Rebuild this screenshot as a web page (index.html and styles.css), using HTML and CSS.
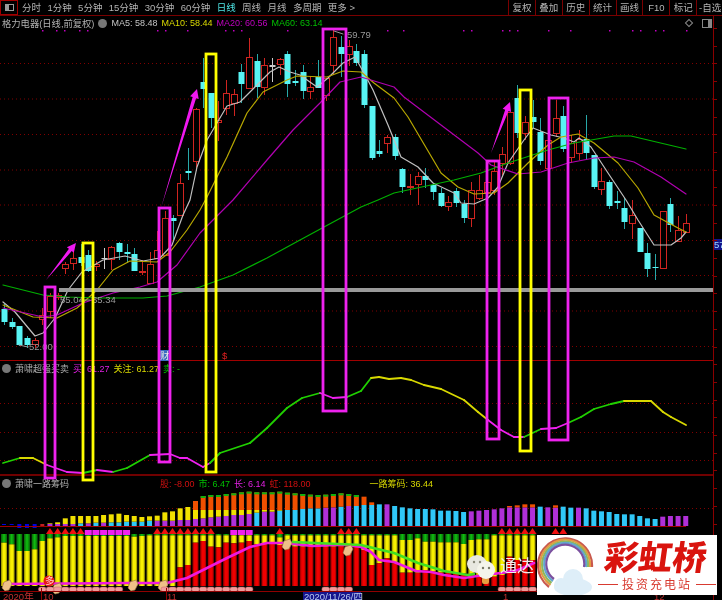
FILE: index.html
```html
<!DOCTYPE html>
<html lang="zh-CN">
<head>
    <meta charset="UTF-8">
    <title>格力电器 日线</title>
    <link rel="stylesheet" href="styles.css">
</head>
<body>
<div class="screen">

    <!-- 顶部工具栏 -->
    <div class="toolbar">
        <div class="tool-icon"><span></span></div>
        <div class="periods">
            <span>分时</span><span>1分钟</span><span>5分钟</span><span>15分钟</span><span>30分钟</span><span>60分钟</span>
            <span class="active">日线</span><span>周线</span><span>月线</span><span>多周期</span><span>更多 &gt;</span>
        </div>
        <div class="tools">
            <span>复权</span><span>叠加</span><span>历史</span><span>统计</span><span>画线</span><span>F10</span><span>标记</span><span>-自选</span>
        </div>
    </div>

    <div class="chart">
        <!-- 主图 -->
        <div class="panel panel-price">
            <div class="head">
                <span class="title">格力电器(日线,前复权)</span>
                <i class="dot"></i>
                <span class="c-gray">MA5: 58.48</span>
                <span class="c-yellow">MA10: 58.44</span>
                <span class="c-purple">MA20: 60.56</span>
                <span class="c-green">MA60: 63.14</span>
                <i class="diamond"></i>
                <i class="win"></i>
            </div>
        </div>
        <!-- 副图一 -->
        <div class="panel panel-ind">
            <div class="head">
                <i class="dot"></i>
                <span class="title">萧啸超强买卖</span>
                <span class="c-magenta">买: 61.27</span>
                <span class="c-yellow">关注: 61.27</span>
                <span class="c-green">卖: -</span>
            </div>
        </div>
        <!-- 副图二 -->
        <div class="panel panel-chip">
            <div class="head">
                <i class="dot"></i>
                <span class="title">萧啸一路筹码</span>
                <span class="c-red first">股: -8.00</span>
                <span class="c-green">市: 6.47</span>
                <span class="c-magenta">长: 6.14</span>
                <span class="c-red">虹: 118.00</span>
                <span class="c-yellow last">一路筹码: 36.44</span>
            </div>
        </div>
    </div>

    <div class="price-tag">57</div>

    <svg id="plot" class="plot" width="722" height="600" viewBox="0 0 722 600"></svg>

    <!-- 水印 -->
    <div class="wechat">
        <svg width="30" height="34" viewBox="0 0 30 34">
            <ellipse cx="10" cy="11" rx="10" ry="9" fill="#e8e8e0"/>
            <rect x="15" y="24" width="7" height="7" rx="2" fill="#e8a040"/>
            <circle cx="19" cy="17" r="9" fill="#f4f4ea"/>
            <circle cx="7" cy="9" r="1.2" fill="#887"/>
            <circle cx="13" cy="9" r="1.2" fill="#887"/>
            <circle cx="16" cy="15" r="1.2" fill="#776"/>
            <circle cx="22" cy="15" r="1.2" fill="#776"/>
        </svg>
        <span>通达</span>
    </div>

    <div class="logo">
        <svg class="rainbow" width="60" height="60" viewBox="0 0 60 60">
            <path d="M12 52A27 27 0 1 1 55 32" stroke="#c9584e"/>
            <path d="M13.5 50A25 25 0 1 1 53 32" stroke="#e39a43"/>
            <path d="M14.5 48A23 23 0 1 1 51 32" stroke="#8db85c"/>
            <path d="M16 46A21 21 0 1 1 49 32" stroke="#62a5cf"/>
            <path d="M17 44A19 19 0 1 1 47 32" stroke="#7b509f"/>
            <g class="cloud">
                <ellipse cx="36" cy="52" rx="19" ry="9"/>
                <circle cx="36" cy="44" r="10"/>
                <circle cx="24" cy="50" r="7"/>
            </g>
        </svg>
        <div class="logo-text">
            <div class="logo-name">彩虹桥</div>
            <div class="logo-sub"><i></i><span>投资充电站</span><i></i></div>
        </div>
    </div>
</div>
<script src="script.js"></script>
</body>
</html>
```

FILE: styles.css
```css
* {
    margin: 0;
    padding: 0;
    box-sizing: border-box;
}

body {
    background: #000;
}

.screen {
    position: relative;
    width: 722px;
    height: 600px;
    overflow: hidden;
    background: #000;
    color: #b4b4b4;
    font-family: "Liberation Sans", "Noto Sans CJK SC", sans-serif;
    font-size: 9.5px;
    filter: blur(0.35px); /* 原图有点糊 */
}

/* 工具栏 */
.toolbar {
    display: flex;
    align-items: stretch;
    height: 16px;
    border-bottom: 1px solid #7a0000;
    line-height: 15px;
}

.tool-icon {
    display: flex;
    align-items: center;
    justify-content: center;
    width: 18px;
    border: 1px solid #a00000;
}

.tool-icon span {
    width: 9px;
    height: 7px;
    border: 1px solid #999;
    border-left-width: 4px;
}

.periods {
    display: flex;
    gap: 6.4px;
    padding-left: 4px;
}

.periods .active {
    color: #4fe8e8;
}

.tools {
    display: flex;
    margin-left: auto;
    width: 214px;
}

.tools span {
    flex: 0 0 26.9px;
    border-left: 1px solid #7a0000;
    text-align: center;
    white-space: nowrap;
}

/* 图表区 */
.chart {
    display: flex;
    flex-direction: column;
    width: 714px;
    height: 584px;
    border-right: 1px solid #8a0000;
}

.panel {
    border-bottom: 1px solid #a00000;
}

.panel-price {
    height: 345px;
}

.panel-ind {
    height: 115px;
    border-bottom-width: 2px;
    border-bottom-color: #700000;
}

.panel-chip {
    flex: 1;
    border-bottom: none;
}

.head {
    display: flex;
    align-items: center;
    height: 14px;
    padding-left: 2px;
    gap: 4px;
    font-size: 9px;
    white-space: nowrap;
}

.panel-ind .head {
    padding-top: 1px;
}

.title {
    color: #b0b0b0;
    font-size: 9px;
}

.panel-price .title {
    font-size: 9.3px;
}

.dot {
    flex: none;
    width: 9px;
    height: 9px;
    border-radius: 50%;
    background: #777;
}

.first {
    margin-left: 87px;
}

.last {
    margin-left: 55px;
}

.c-gray { color: #c4c4c4; }
.c-yellow { color: #d8d800; }
.c-purple { color: #c000c0; }
.c-magenta { color: #e020e0; }
.c-green { color: #00c000; }
.c-red { color: #d01010; }

.diamond {
    width: 6px;
    height: 6px;
    margin-left: auto;
    margin-right: 6px;
    border: 1px solid #888;
    transform: rotate(45deg);
}

.win {
    width: 10px;
    height: 9px;
    margin-right: 1px;
    border: 1px solid #888;
    border-right-width: 4px;
}

.price-tag {
    position: absolute;
    left: 714px;
    top: 239px;
    width: 8px;
    height: 11px;
    overflow: hidden;
    background: #14148c;
    color: #9fd8ff;
    font-size: 9.5px;
    line-height: 11px;
}

.plot {
    position: absolute;
    left: 0;
    top: 0;
}

.plot text {
    font-family: "Liberation Sans", "Noto Sans CJK SC", sans-serif;
    font-size: 9.5px;
}

/* 水印 */
.wechat {
    position: absolute;
    left: 467px;
    top: 553px;
    display: flex;
    align-items: center;
    gap: 3px;
    color: #eee;
    font-size: 17px;
    line-height: 22px;
}

.wechat span {
    margin-bottom: 7px;
}

.logo {
    position: absolute;
    left: 537px;
    top: 535px;
    display: flex;
    width: 180px;
    height: 60px;
    background: #fff;
    overflow: hidden;
}

.rainbow {
    flex: none;
    fill: none;
    stroke-width: 2.2;
}

.cloud {
    fill: #deeef8;
    stroke: none;
}

.logo-text {
    display: flex;
    flex-direction: column;
    align-items: center;
    width: 120px;
}

.logo-name {
    padding-right: 2px;
    color: #d9140e;
    font-family: "Noto Sans CJK SC", sans-serif;
    font-size: 34px;
    font-weight: 900;
    line-height: 41px;
    transform: skewX(-8deg);
}

.logo-sub {
    display: flex;
    align-items: center;
    gap: 4px;
    color: #d83a30;
    font-family: "Noto Sans CJK SC", sans-serif;
    font-size: 12px;
    line-height: 16px;
    letter-spacing: 2px;
}

.logo-sub i {
    width: 20px;
    height: 1px;
    background: #d83a30;
}
```

FILE: script.js
```js
const svg = document.getElementById('plot');
let out = '';

const RED = '#d02420';
const CYAN = '#58f4f4';
const WICK = '#28a8a8';
const barX = (i) => 4 + 7.66 * i;
// 副图的柱子数据是按 y = 400 + v / 3 记的
const lowY = (v) => 400 + v / 3;

function line(pts, color, width) {
    const p = pts.map((a) => a.join(',')).join(' ');
    out += `<polyline points="${p}" fill="none" stroke="${color}" stroke-width="${width}" stroke-linejoin="round" stroke-linecap="round"/>`;
}

function rect(x, y, w, h, fill) {
    out += `<rect x="${x}" y="${y}" width="${w}" height="${h}" fill="${fill}"/>`;
}

function label(x, y, text, color) {
    out += `<text x="${x}" y="${y}" fill="${color}">${text}</text>`;
}

// 虚线网格
const priceGrid = [63, 98.5, 134, 169.5, 204.5, 240, 275, 310.5, 346];
const lowGrid = [403, 432, 460, 508];
priceGrid.concat(lowGrid).forEach((y) => {
    out += `<line x1="0" y1="${y + 0.5}" x2="713" y2="${y + 0.5}" stroke="#800000" stroke-dasharray="1 3"/>`;
});

// 右侧刻度
for (let y = 28; y < 590; y += 17.7) {
    rect(714, Math.round(y), 3, 1, '#8a0000');
}

// 顶部信号点
[42, 56, 64, 79, 87, 157, 165, 187, 225, 233, 241, 287, 387, 403, 463, 471, 502, 509, 517, 548, 570, 609, 632, 640, 655, 663, 686]
    .forEach((x) => rect(x, 30, 1.5, 1.5, '#c000c0'));

// K 线: 实体上, 实体下, 最高, 最低, 类型
const candles = [
    [309,322,304,325,'c'],[322,327,318,329,'c'],[326,345,326,346,'c'],[338,345,336,348,'c'],[340,344,338,348,'r'],
    [315,319,308,325,'r'],[296,311,293,318,'r'],[295,297,293,300,'r'],[264,268,262,274,'r'],[258,263,252,270,'r'],
    [257,263,244,266,'c'],[255,271,250,272,'c'],[264,266,261,271,'r'],[258,259,248,269,'w'],[247,259,246,270,'r'],
    [243,252,242,260,'c'],[252,254,244,263,'c'],[254,271,248,271,'c'],[271,272,260,275,'r'],[264,283,252,284,'r'],
    [250,258,231,258,'r'],[218,255,211,256,'r'],[218,221,215,240,'c'],[183,215,174,215,'r'],[171,173,148,180,'c'],
    [109,161,108,171,'r'],[82,89,58,108,'c'],[93,118,93,128,'c'],[120,122,101,141,'r'],[93,108,80,115,'r'],
    [94,103,89,116,'r'],[72,84,64,103,'c'],[57,88,38,88,'r'],[61,87,54,98,'c'],[65,87,58,95,'r'],
    [65,67,58,82,'w'],[59,64,58,75,'r'],[54,84,51,97,'c'],[81,83,70,86,'c'],[72,91,65,99,'c'],
    [87,91,76,99,'r'],[77,88,60,88,'c'],[78,95,78,101,'r'],[37,65,30,75,'r'],[47,54,36,77,'c'],
    [46,54,40,66,'r'],[51,63,44,66,'c'],[54,105,50,108,'c'],[106,158,106,160,'c'],[151,154,140,157,'c'],
    [137,143,135,153,'r'],[137,156,134,160,'c'],[169,187,168,193,'c'],[186,187,174,195,'r'],[176,184,172,205,'r'],
    [176,180,168,188,'c'],[185,192,183,200,'c'],[193,206,188,207,'c'],[202,206,196,211,'r'],[191,203,188,207,'c'],
    [204,218,200,223,'c'],[190,218,182,227,'r'],[190,198,175,200,'r'],[182,192,175,205,'r'],[171,190,160,195,'r'],
    [154,163,147,175,'r'],[112,163,112,165,'r'],[98,133,85,138,'c'],[122,133,116,140,'r'],[117,122,100,128,'c'],
    [132,161,118,165,'c'],[140,168,130,170,'r'],[118,133,100,137,'r'],[116,149,106,152,'c'],[143,157,135,163,'r'],
    [139,153,130,160,'r'],[139,153,115,160,'c'],[155,187,155,189,'c'],[181,189,168,195,'r'],[182,206,180,209,'c'],
    [201,203,191,209,'c'],[208,222,198,229,'c'],[215,223,200,239,'r'],[228,252,228,252,'c'],[253,269,243,277,'c'],
    [267,268,254,280,'c'],[211,268,211,268,'r'],[204,225,198,232,'c'],[230,241,216,241,'r'],[223,232,214,232,'r']
];

candles.forEach((c, i) => {
    const x = Math.round(barX(i));
    const wick = c[4] === 'r' ? RED : c[4] === 'w' ? '#ccc' : WICK;
    rect(x, c[2], 1, c[3] - c[2], wick);
    if (c[4] === 'r') {
        out += `<rect x="${x - 2.5}" y="${c[0] + 0.5}" width="6" height="${c[1] - c[0]}" fill="#000" stroke="${RED}"/>`;
    } else {
        rect(x - 2.5, c[0], 6, c[1] - c[0], c[4] === 'w' ? '#ccc' : CYAN);
    }
});

// 均线
line([[3,302],[15,312],[35,336],[43,333],[55,318],[68,290],[82,272],[103,260],[125,256],[143,261],[160,258],[172,245],[183,215],[190,200],[197,167],[207,140],[217,123],[227,106],[240,102],[257,85],[270,72],[279,67],[290,72],[300,75],[317,87],[328,78],[343,63],[355,57],[364,73],[373,90],[388,125],[401,157],[418,167],[433,183],[454,193],[461,203],[474,204],[488,198],[498,187],[508,163],[524,140],[533,128],[551,135],[564,138],[574,142],[579,138],[591,147],[608,173],[626,200],[638,220],[654,245],[671,245],[681,238],[686,232]], '#c0c0c0', 1.2);
line([[3,305],[33,317],[57,318],[77,308],[97,290],[113,270],[130,261],[157,262],[170,252],[187,230],[200,210],[207,197],[227,157],[247,113],[263,92],[287,80],[297,76],[327,77],[343,71],[361,72],[374,83],[394,98],[408,117],[441,173],[458,187],[474,194],[494,193],[508,183],[528,163],[548,145],[561,137],[578,134],[594,143],[618,163],[638,188],[654,215],[678,228],[686,232]], '#b8a800', 1.2);
line([[3,308],[43,317],[57,315],[83,303],[113,293],[140,287],[157,282],[177,265],[200,233],[233,200],[267,160],[293,130],[320,103],[340,82],[361,77],[394,87],[404,97],[478,153],[491,165],[518,174],[541,172],[568,163],[594,158],[614,157],[634,162],[661,177],[686,194]], '#b000b0', 1.2);
line([[3,285],[43,295],[67,297],[100,298],[143,298],[167,296],[200,287],[233,275],[267,258],[300,240],[361,207],[378,200],[394,193],[454,180],[481,173],[508,163],[548,150],[574,143],[614,136],[631,136],[686,149]], '#00b000', 1.2);

label(347, 38, '59.79', '#999');
label(60, 303, '55.04', '#999');
label(92, 303, '55.34', '#999');
label(29, 350, '52.00', '#999');
line([[334,31],[343,34]], '#999', 1);
line([[80,300],[90,300]], '#999', 1);
line([[19,345],[28,347]], '#999', 1);

rect(160, 350, 9, 11, '#3a6cc0');
label(160, 359, '财', '#e8e8e8');
label(222, 359, '$', '#e02020');

// 灰色横条
rect(59, 288, 654, 4, '#999');

// 买卖线
const signalRanges = [
    [25,'#20d000'],[44,'#d8d800'],[88,'#f020f0'],[98,'#20d000'],[118,'#f020f0'],[150,'#20d000'],[208,'#f020f0'],
    [320,'#20d000'],[345,'#f020f0'],[371,'#20d000'],[487,'#d8d800'],[531,'#f020f0'],[541,'#20d000'],[564,'#f020f0'],
    [624,'#20d000'],[640,'#d8d800'],[651,'#20d000'],[690,'#d8d800']
];
const signal = [[3,463],[20,458],[33,458],[47,465],[67,472],[83,473],[97,470],[113,472],[127,468],[150,455],[170,454],[180,458],[187,458],[203,467],[210,463],[220,453],[250,443],[267,428],[287,408],[302,398],[320,393],[333,398],[347,397],[361,391],[371,378],[379,377],[389,379],[401,378],[411,380],[424,385],[441,389],[464,400],[478,412],[488,420],[501,430],[514,437],[524,437],[541,429],[556,428],[568,423],[581,417],[594,409],[611,404],[624,401],[651,401],[663,412],[671,417],[686,425]];
signal.slice(1).forEach((p, i) => {
    const mid = (p[0] + signal[i][0]) / 2;
    const range = signalRanges.find((r) => mid < r[0]);
    line([signal[i], p], range[1], 1.8);
});

// 上方柱子的顶
const tops = [375,375,375,375,375,375,370,367,355,348,348,348,348,345,343,341,345,348,351,349,347,337,334,325,321,303,288,285,285,282,280,277,275,277,277,277,275,278,280,282,284,285,284,282,280,282,285,
    290,307,313,313,318,322,325,327,327,328,332,332,333,336,334,332,330,328,325,318,316,313,313,320,322,316,320,323,323,325,332,334,336,342,343,343,348,355,357,350,348,348,348];
// 蓝紫部分的顶, 0 表示没有
const bases = [0,0,0,0,0,0,372,372,372,372,370,370,368,368,367,367,365,365,365,362,362,362,362,360,360,357,355,352,350,348,345,345,342,338,335,335,332,330,330,327,325,325,323,322,320,318,318,
    315,315,313,313,318,322,325,327,327,328,332,332,333,336,334,332,330,328,325,322,322,322,322,320,322,323,320,323,323,325,332,334,336,342,343,343,348,355,357,350,348,348,348];
const blueBars = [10,12,14,15,16,17,18,19,33,36,37,38,39,40,41,44,46,47,48,49,51,52,53,54,55,56,57,58,59,60,70,73,74,76,77,78,79,80,81,82,83,84,85];

tops.forEach((t, i) => {
    const x = barX(i) - 2.5;
    const base = lowY(bases[i] || 377);
    const top = lowY(t);
    if (i < 6) {
        rect(x + 0.5, 524, 4, i < 2 ? 1 : i === 5 ? 2 : 4, i === 5 ? '#c02020' : '#0000e0');
        return;
    }
    rect(x, base, 5, 526 - base, blueBars.includes(i) ? '#30c8f8' : '#b030d8');
    const yellowTop = lowY(330);
    if (i < 25) {
        rect(x, top, 5, base - top, '#f0e000');
    } else if (i < 37) {
        rect(x, yellowTop, 5, base - yellowTop, '#f0e000');
    }
    if (i >= 25 && top < base) {
        const orangeBottom = i < 37 ? yellowTop : base;
        rect(x, top, 5, orangeBottom - top, '#f05000');
        if (i >= 26 && i < 47) rect(x, top, 5, 2, '#10b010');
    }
});
rect(0, 526, 686, 1, '#a00000');

// 筹码柱: 红色顶, 绿色底
const redTops = [558,558,558,558,558,558,558,558,558,558,558,558,558,558,558,558,558,558,558,558,558,558,558,502,495,428,423,440,442,428,430,428,423,432,432,432,435,435,440,440,440,440,440,440,435,435,435,
    450,495,490,475,490,518,518,518,510,515,518,518,520,520,525,525,525,530,525,470,480,478,480];
const greenEnds = [428,433,453,453,448,423,415,412,408,408,408,408,408,408,408,408,408,410,408,406,406,406,406,406,406,406,406,406,406,406,406,406,406,406,406,406,412,406,406,406,406,406,406,406,406,406,406,
    406,406,406,406,406,420,420,415,425,425,427,427,427,432,420,418,418,406,406,406,406,406,406];

redTops.forEach((r, i) => {
    const x = barX(i) - 3;
    const red = lowY(r);
    const green = lowY(greenEnds[i]);
    rect(x, 534, 6, green - 534, 'url(#gradGreen)');
    rect(x, green, 6, red - green, 'url(#gradYellow)');
    rect(x, red, 6, 586 - red, 'url(#gradRed)');
});

// 三角和方块信号
[6,7,8,9,10,20,21,22,23,24,25,26,27,36,44,45,46,65,66,67,68,69,72,73].forEach((i) => {
    const x = barX(i);
    out += `<polygon points="${x - 4},534 ${x + 4},534 ${x},528" fill="#f01010"/>`;
});
[11,12,13,14,15,16,30,31,32].forEach((i) => rect(barX(i) - 3.5, 530, 7, 5, '#f020f0'));

// 筹码线
line([[4,584],[127,583],[167,583],[187,578],[207,568],[227,558],[250,547],[267,543],[283,543],[293,544],[313,546],[333,545],[347,545],[361,547],[371,552],[379,560],[394,562],[416,571],[431,572],[444,575],[464,578],[484,575],[501,573],[518,570],[534,563]], '#f018e0', 2.6);
line([[293,542],[361,545],[394,553],[418,563],[444,571],[468,575],[474,574]], '#40e020', 2.6);

// 手形标记
function hand(x, y) {
    out += `<path d="M${x - 5} ${y + 3}L${x - 3} ${y - 3}L${x + 3} ${y - 5}L${x + 5} ${y - 1}L${x + 2} ${y + 5}L${x - 2} ${y + 6}Z" fill="#eec088" stroke="#9a7040" stroke-width=".6"/>`;
}
[[7,585],[57,588],[133,585],[163,585],[287,544],[348,550]].forEach((p) => hand(p[0], p[1]));

out += '<circle cx="49" cy="581" r="5.5" fill="#e81818"/>';
label(45, 584, '多', '#ffd0d0');

// 粉色小泡
[5,6,7,8,9,10,11,12,13,14,15,21,22,23,24,25,26,27,28,29,30,31,32,42,43,44,45,65,66,67,68,69].forEach((i) => {
    out += `<rect x="${barX(i) - 3.8}" y="587" width="7.6" height="4.5" rx="2" fill="#f09c9c" stroke="#c86060" stroke-width=".5"/>`;
});

// 时间轴
rect(0, 591, 713, 1, '#900000');
rect(41, 588, 1, 12, '#900000');
rect(166, 588, 1, 12, '#900000');
label(3, 600, '2020年', '#c03030');
label(43, 600, '10', '#c03030');
label(167, 600, '11', '#c03030');
label(503, 600, '1', '#c03030');
label(654, 600, '12', '#c03030');
rect(303, 592, 58, 8, '#14148c');
label(304, 600, '2020/11/26/四', '#b8c8f0');

// 指示框
function box(x1, y1, x2, y2, color) {
    out += `<rect x="${x1}" y="${y1}" width="${x2 - x1}" height="${y2 - y1}" fill="none" stroke="${color}" stroke-width="2.8"/>`;
}
const PINK = '#ee22ee';
const YELLOW = '#ffff00';
box(45, 287, 55, 478, PINK);
box(83, 243, 93, 480, YELLOW);
box(159, 208, 170, 462, PINK);
box(206, 54, 216, 472, YELLOW);
box(323, 29, 346, 411, PINK);
box(487, 161, 499, 439, PINK);
box(520, 90, 531, 451, YELLOW);
box(549, 98, 568, 440, PINK);

// 箭头
function arrow(x1, y1, x2, y2) {
    const a = Math.atan2(y2 - y1, x2 - x1);
    const nx = -Math.sin(a);
    const ny = Math.cos(a);
    const bx = x2 - Math.cos(a) * 9;
    const by = y2 - Math.sin(a) * 9;
    const pts = [
        [x1, y1],
        [bx + nx * 1.8, by + ny * 1.8],
        [bx + nx * 4.5, by + ny * 4.5],
        [x2, y2],
        [bx - nx * 4.5, by - ny * 4.5],
        [bx - nx * 1.8, by - ny * 1.8]
    ];
    out += `<polygon points="${pts.map((p) => p.join(',')).join(' ')}" fill="#f018f0"/>`;
}
arrow(46, 280, 76, 243);
arrow(161, 208, 197, 89);
arrow(491, 153, 510, 102);

const defs = `<defs>
    <linearGradient id="gradYellow"><stop offset="0" stop-color="#8a8400"/><stop offset=".35" stop-color="#f8f000"/><stop offset=".7" stop-color="#f8f000"/><stop offset="1" stop-color="#8a8400"/></linearGradient>
    <linearGradient id="gradRed"><stop offset="0" stop-color="#900000"/><stop offset=".35" stop-color="#f00000"/><stop offset=".7" stop-color="#f00000"/><stop offset="1" stop-color="#900000"/></linearGradient>
    <linearGradient id="gradGreen"><stop offset="0" stop-color="#086008"/><stop offset=".5" stop-color="#10c010"/><stop offset="1" stop-color="#086008"/></linearGradient>
</defs>`;
svg.innerHTML = defs + out;
```
